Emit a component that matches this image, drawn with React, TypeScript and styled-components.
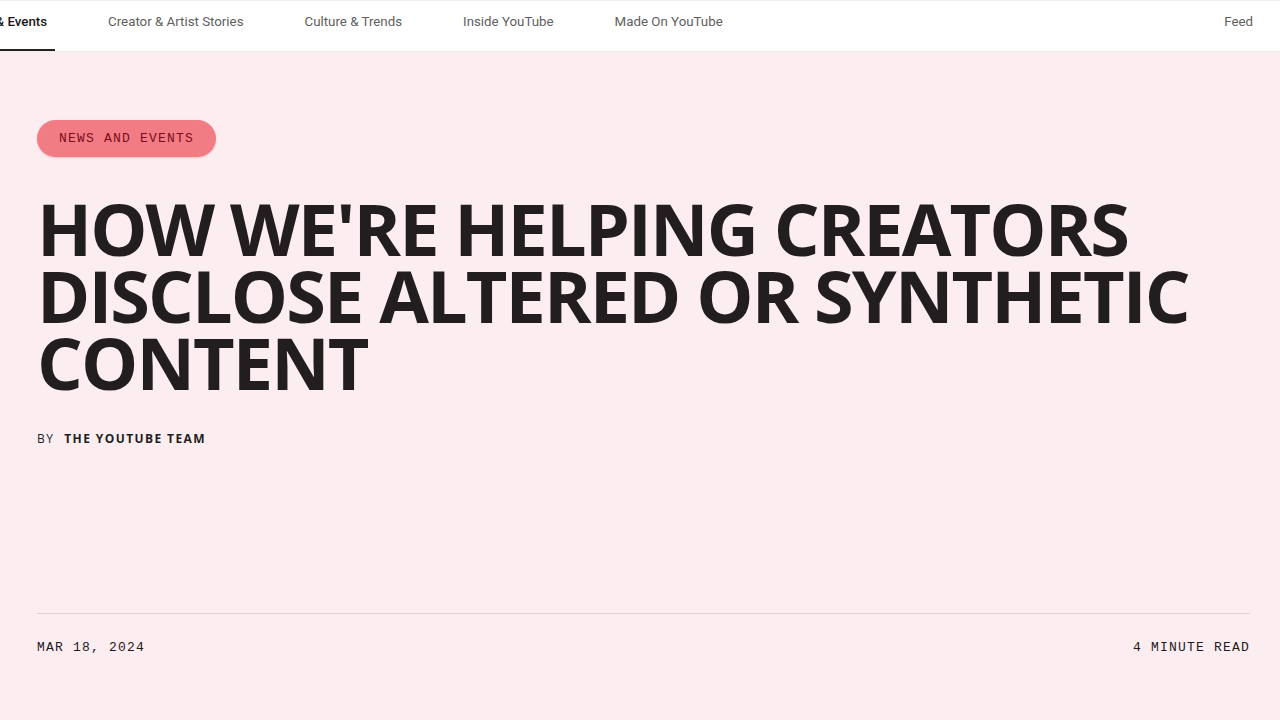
import styled, { createGlobalStyle } from "styled-components";

const GlobalStyle = createGlobalStyle`
  html, body {
    margin: 0;
    padding: 0;
    background: #fcedf0;
  }
  * { box-sizing: border-box; }
`;

const navItems = [
  "News & Events",
  "Creator & Artist Stories",
  "Culture & Trends",
  "Inside YouTube",
  "Made On YouTube",
];

const Page = styled.div`
  width: 1280px;
  height: 720px;
  overflow: hidden;
  display: flex;
  flex-direction: column;
  background: #fcedf0;
`;

const TopBar = styled.header`
  height: 52px;
  flex: none;
  background: #fff;
  border-top: 1px solid #f0eeee;
  border-bottom: 1px solid #f1e6e8;
  display: flex;
  align-items: stretch;
  justify-content: space-between;
  padding-right: 19px;
  overflow: hidden;
`;

// tab strip is scrolled a little, so the first tab starts past the left edge
const NavList = styled.nav`
  display: flex;
  align-items: stretch;
  gap: 45px;
  margin-left: -49px;
`;

const NavItem = styled.a<{ $active?: boolean }>`
  position: relative;
  display: flex;
  align-items: center;
  padding: 0 8px 10px;
  font-family: Roboto, "Liberation Sans", sans-serif;
  font-size: 13.3px;
  font-weight: ${(p) => (p.$active ? 500 : 400)};
  color: ${(p) => (p.$active ? "#1a1a1a" : "#606060")};
  white-space: nowrap;
  text-decoration: none;
  &::after {
    content: "";
    position: absolute;
    left: 0;
    right: 0;
    bottom: -1px;
    height: 3px;
    background: ${(p) => (p.$active ? "#222" : "transparent")};
  }
`;

const Main = styled.main`
  flex: 1;
  display: flex;
  flex-direction: column;
  padding: 68px 30px 0 37px;
`;

const Tag = styled.span`
  align-self: flex-start;
  height: 37px;
  padding: 0 22px;
  display: flex;
  align-items: center;
  border-radius: 19px;
  background: #f27c84;
  box-shadow: 0 1px 2px rgba(180, 60, 70, 0.25);
  font-family: "Liberation Mono", monospace;
  font-size: 13px;
  letter-spacing: 1.2px;
  color: #7a0e1c;
`;

const Title = styled.h1`
  margin: 38px 0 0;
  font-family: "Open Sans", "Noto Sans", sans-serif;
  font-weight: 700;
  font-size: 72px;
  line-height: 67px;
  letter-spacing: -1.9px;
  color: #221e1f;
`;

const Byline = styled.div`
  margin-top: 34px;
  display: flex;
  gap: 10px;
  font-family: "Open Sans", "Noto Sans", sans-serif;
  font-size: 12px;
  letter-spacing: 1.4px;
  color: #221e1f;
`;

const Author = styled.span`
  font-weight: 700;
`;

const Spacer = styled.div`
  flex: 1;
`;

const MetaRow = styled.div`
  border-top: 1px solid #ddd0d3;
  display: flex;
  justify-content: space-between;
  padding: 26px 0 65px;
  font-family: "Liberation Mono", monospace;
  font-size: 13px;
  letter-spacing: 1.2px;
  color: #1e1a1b;
`;

export default function App() {
  return (
    <Page>
      <GlobalStyle />
      <TopBar>
        <NavList>
          {navItems.map((item, i) => (
            <NavItem key={item} $active={i === 0}>
              {item}
            </NavItem>
          ))}
        </NavList>
        <NavItem>Feed</NavItem>
      </TopBar>
      <Main>
        <Tag>NEWS AND EVENTS</Tag>
        <Title>
          HOW WE'RE HELPING CREATORS
          <br />
          DISCLOSE ALTERED OR SYNTHETIC
          <br />
          CONTENT
        </Title>
        <Byline>
          <span>BY</span>
          <Author>THE YOUTUBE TEAM</Author>
        </Byline>
        <Spacer />
        <MetaRow>
          <span>MAR 18, 2024</span>
          <span>4 MINUTE READ</span>
        </MetaRow>
      </Main>
    </Page>
  );
}
